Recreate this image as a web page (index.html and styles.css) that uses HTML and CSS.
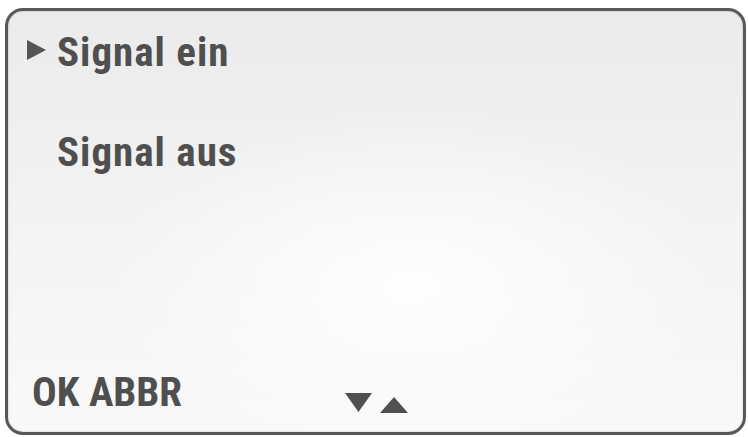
FILE: index.html
```html
<!DOCTYPE html>
<html lang="de">
<head>
<meta charset="utf-8">
<title>Signal</title>
<link rel="stylesheet" href="styles.css">
</head>
<body>
<div class="screen">
  <ul class="menu">
    <li class="item selected">
      <span class="marker"><svg width="19" height="20" viewBox="0 0 19 20"><polygon points="0,0 19,10 0,20" fill="#555"/></svg></span>
      <span class="label">Signal ein</span>
    </li>
    <li class="item">
      <span class="marker"></span>
      <span class="label">Signal aus</span>
    </li>
  </ul>
  <div class="footer">
    <span class="softkeys">OK ABBR</span>
    <svg class="arrows" width="64" height="22" viewBox="0 0 64 22"><polygon points="0,1 27,1 13.5,20" fill="#505050"/><polygon points="35,21 63,21 49,5" fill="#505050"/></svg>
  </div>
</div>
</body>
</html>
```
FILE: styles.css
```css
html, body {
  margin: 0;
  padding: 0;
  background: #ffffff;
}
body {
  width: 748px;
  height: 437px;
  overflow: hidden;
  font-family: "Roboto Condensed", "Open Sans", sans-serif;
  font-weight: 700;
  color: #4f4f4f;
}
.screen {
  box-sizing: border-box;
  margin: 8px 0 0 5px;
  width: 741px;
  height: 427px;
  border: 3px solid #585858;
  border-radius: 18px;
  background:
    radial-gradient(ellipse 60% 60% at 55% 65%, rgba(255,255,255,0.9), rgba(255,255,255,0) 70%),
    linear-gradient(180deg, #ebebeb 0%, #f3f3f3 50%, #f9f9f9 100%);
  box-shadow: inset 0 0 2px rgba(0,0,0,0.25);
  display: flex;
  flex-direction: column;
  padding: 21px 0 20px 0;
}
.menu {
  list-style: none;
  margin: 0;
  padding: 0;
  display: flex;
  flex-direction: column;
  row-gap: 60px;
}
.item {
  display: flex;
  align-items: flex-start;
  font-size: 41px;
  line-height: 40px;
  height: 40px;
  letter-spacing: 1px;
  padding-left: 19px;
}
.marker {
  flex: none;
  width: 19px;
  height: 20px;
  margin-right: 11px;
  margin-top: 8px;
  display: flex;
}
.footer {
  margin-top: auto;
  display: grid;
  grid-template-columns: 313px auto;
  align-items: start;
  padding-left: 24px;
  font-size: 41px;
  line-height: 40px;
  height: 40px;
}
.arrows {
  display: block;
  margin-top: 20px;
}
```
